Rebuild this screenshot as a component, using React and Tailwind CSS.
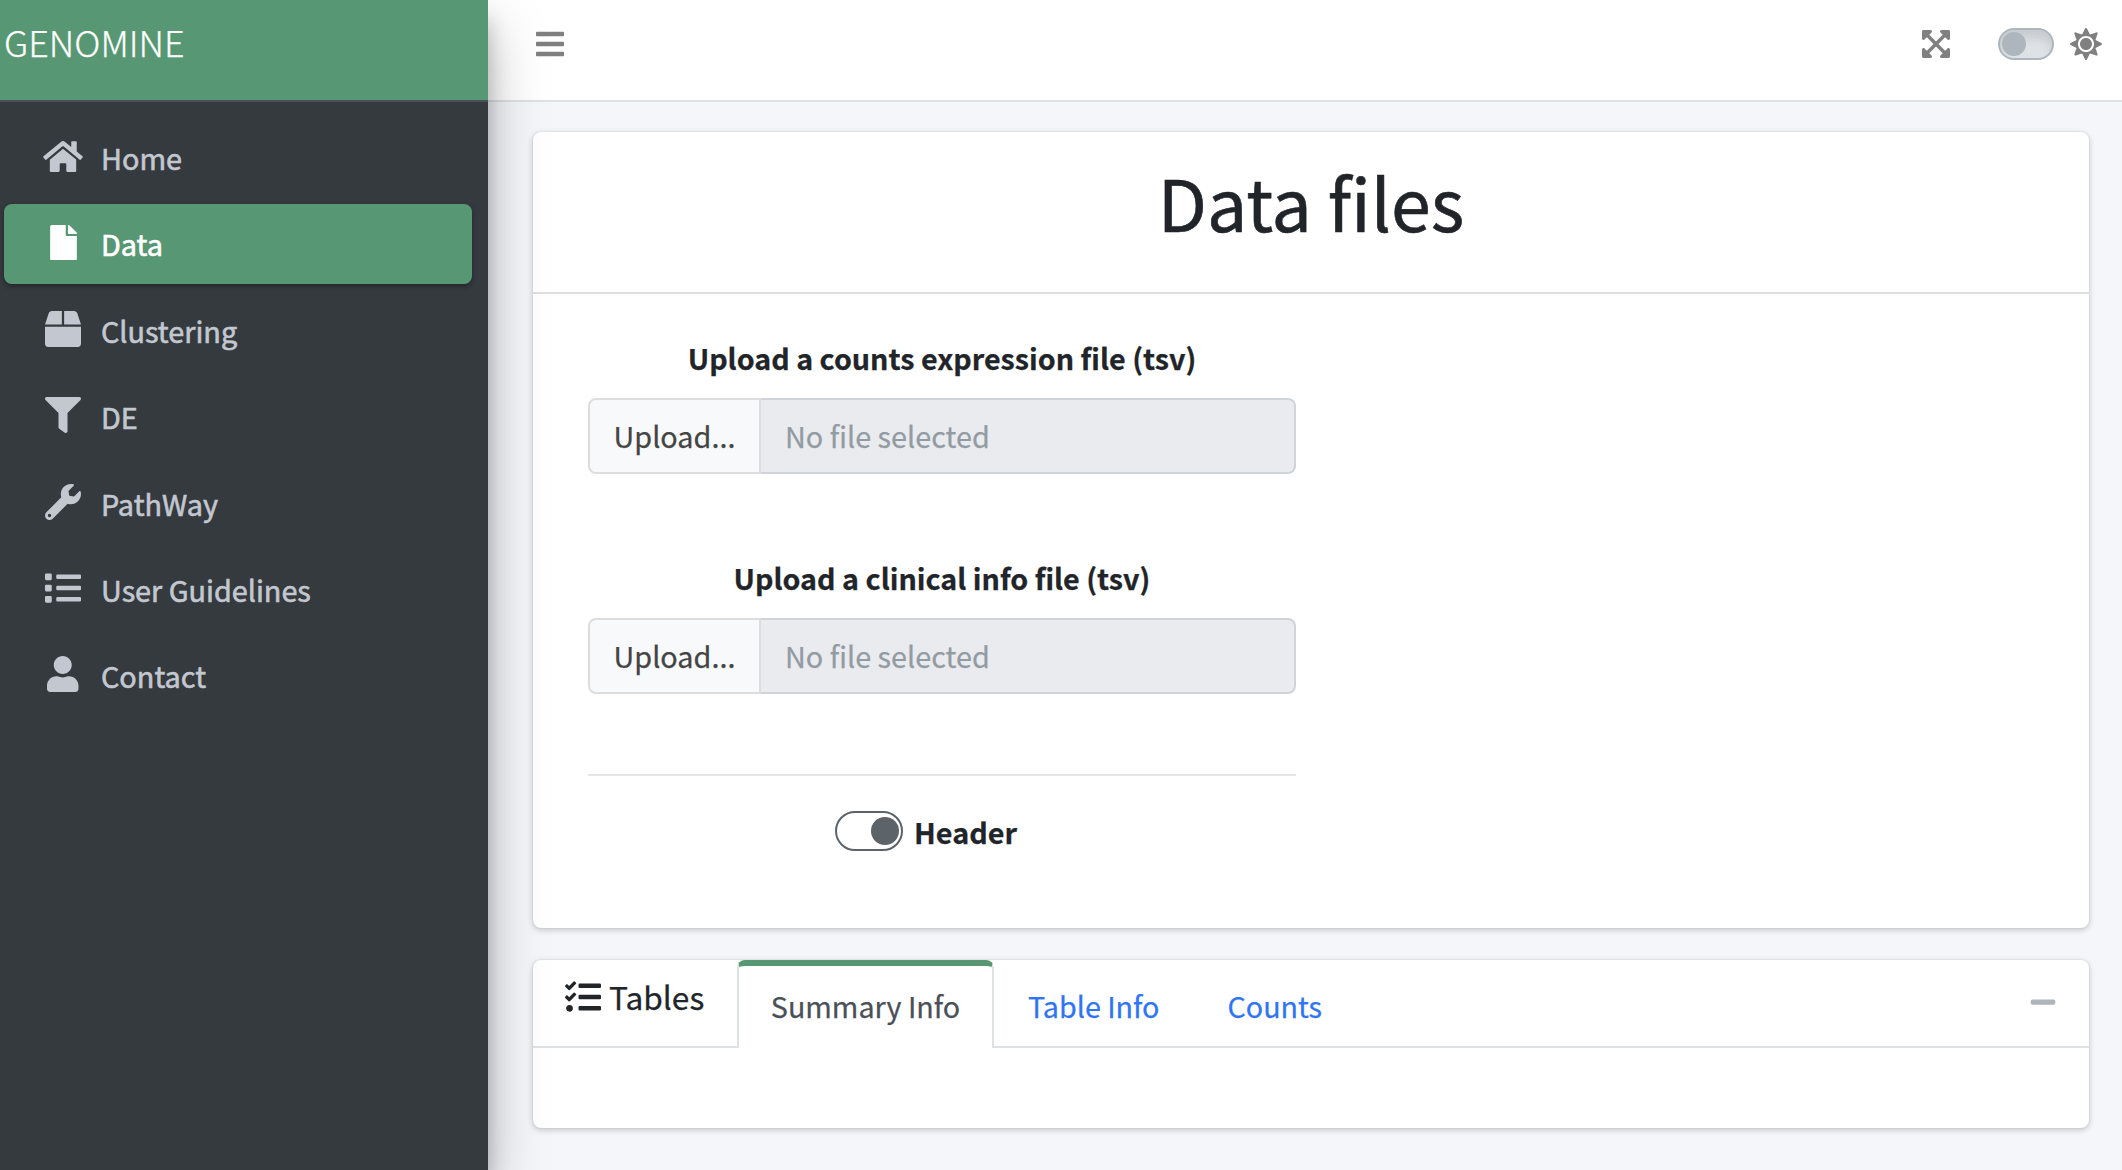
import React from "react";
import {
  FaHome, FaFile, FaBox, FaFilter, FaWrench, FaList, FaUser,
  FaBars, FaExpandArrowsAlt, FaSun, FaTasks, FaMinus,
} from "react-icons/fa";

const NAV = [
  { label: "Home", Icon: FaHome, size: "h-[35.2px] w-[40px]" },
  { label: "Data", Icon: FaFile, size: "h-[35.6px] w-[27px]", active: true },
  { label: "Clustering", Icon: FaBox, size: "size-[36px]" },
  { label: "DE", Icon: FaFilter, size: "size-[36px]" },
  { label: "PathWay", Icon: FaWrench, size: "size-[36px]" },
  { label: "User Guidelines", Icon: FaList, size: "size-[36px]" },
  { label: "Contact", Icon: FaUser, size: "h-[36px] w-[31.5px]" },
];

const CARD =
  "rounded-lg bg-white shadow-[0_0_2px_rgba(0,0,0,0.125),0_2px_6px_rgba(0,0,0,0.2)]";

function Sidebar() {
  return (
    <aside className="relative z-10 flex w-[488px] shrink-0 flex-col bg-[#353a3e] shadow-[0_28px_56px_rgba(0,0,0,0.25),0_20px_20px_rgba(0,0,0,0.22)]">
      <div className="h-[102px] border-b-2 border-[#4b4f57] bg-[#589773] pl-1 pt-[17px] text-[36px] font-light leading-[48px] text-white">
        GENOMINE
      </div>
      <nav className="flex flex-col gap-[6.4px] pl-1 pr-4 pt-[15.6px]">
        {NAV.map(({ label, Icon, size, active }) => (
          <a
            key={label}
            className={
              active
                ? "flex h-20 items-center rounded-lg bg-[#589773] pl-8 text-white shadow-[0_2px_6px_rgba(0,0,0,0.12),0_2px_4px_rgba(0,0,0,0.24)]"
                : "flex h-20 items-center rounded-lg pl-8 text-[#c3c7d0]"
            }
          >
            <span className="mb-[3px] flex w-[54px] shrink-0 justify-center">
              <Icon className={`${size} shrink-0`} preserveAspectRatio="xMidYMid meet" />
            </span>
            <span className="pl-[11px] [-webkit-text-stroke:0.6px_currentColor]">{label}</span>
          </a>
        ))}
      </nav>
    </aside>
  );
}

function TopBar() {
  return (
    <header className="flex h-[102px] items-start justify-between border-b-2 border-[#dee2e6] bg-white pl-12 pr-5 pt-7 text-[#808080]">
      <FaBars className="h-8 w-7" />
      <div className="flex items-center">
        <FaExpandArrowsAlt className="h-8 w-7" />
        <div className="ml-12 flex h-8 w-14 items-center rounded-full border-2 border-[#adb5bd] bg-[#dee2e6] pl-0.5 shadow-[inset_0_8px_8px_rgba(0,0,0,0.1)]">
          <div className="size-6 rounded-full bg-[#adb5bd]" />
        </div>
        <FaSun className="ml-4 size-8" />
      </div>
    </header>
  );
}

function FileInput({ label }) {
  return (
    <div className="mb-20">
      <div className="mb-4 text-center text-[28.7px] font-bold leading-[48px]">{label}</div>
      <div className="flex h-[76px]">
        <button className="w-[173px] rounded-l-lg border-2 border-[#dddddd] bg-[#f8f9fa] text-[#444444]">
          Upload...
        </button>
        <div className="flex flex-1 items-center rounded-r-lg border-2 border-l-0 border-[#ced4da] bg-[#eaebef] pl-6 text-[#939ba2]">
          No file selected
        </div>
      </div>
    </div>
  );
}

function DataFilesCard() {
  return (
    <section className={`${CARD} h-[796px]`}>
      <div className="h-[162px] border-b-2 border-[#dfdfdf] pt-[21px] text-center text-[71.6px] leading-[96px] [-webkit-text-stroke:0.6px_currentColor]">
        Data files
      </div>
      <div className="ml-[55px] w-[708px] pt-10">
        <FileInput label="Upload a counts expression file (tsv)" />
        <FileInput label="Upload a clinical info file (tsv)" />
        <div className="h-0.5 bg-[#e5e5e5]" />
        <div className="ml-[247px] mt-[35px] flex h-10 items-center">
          <div className="flex h-10 w-[68px] items-center justify-end rounded-full border-2 border-[#5c6469] pr-0.5">
            <div className="size-7 rounded-full bg-[#5c6469]" />
          </div>
          <span className="ml-[11px] mt-0.5 font-bold">Header</span>
        </div>
      </div>
    </section>
  );
}

function TablesCard() {
  return (
    <section className={`${CARD} mt-8 h-[168px]`}>
      <div className="flex h-[88px] items-stretch">
        <div className="flex w-[204px] items-start border-b-2 border-[#dee2e6] pl-8 pt-3">
          <FaTasks className="mt-[7px] size-[36px] shrink-0" />
          <span className="ml-2 text-[31.7px] leading-[48px]">Tables</span>
        </div>
        <div className="w-[257px] rounded-t-lg border-x-2 border-t-[6px] border-x-[#dee2e6] border-t-[#589773] pt-4 text-center text-[28.7px] leading-[48px] text-[#495057]">
          Summary Info
        </div>
        <div className="flex flex-1 items-start border-b-2 border-[#dee2e6] pl-[34px] pr-8 pt-[22px] text-[28.7px] leading-[48px] text-[#2f74f5]">
          <a>Table Info</a>
          <a className="ml-[68px]">Counts</a>
          <FaMinus className="ml-auto mt-[6px] h-7 w-[28px] text-[#adb5bd]" />
        </div>
      </div>
    </section>
  );
}

export default function App() {
  return (
    <div className="flex h-[1170px] w-[2122px] overflow-hidden bg-[#f4f6fa] font-['Noto_Sans_CJK_SC',sans-serif] text-[28.8px] text-[#212529] [-webkit-text-stroke:0.25px_currentColor]">
      <Sidebar />
      <div className="flex min-w-0 flex-1 flex-col">
        <TopBar />
        <main className="pl-[45px] pr-[33px] pt-[30px]">
          <DataFilesCard />
          <TablesCard />
        </main>
      </div>
    </div>
  );
}
